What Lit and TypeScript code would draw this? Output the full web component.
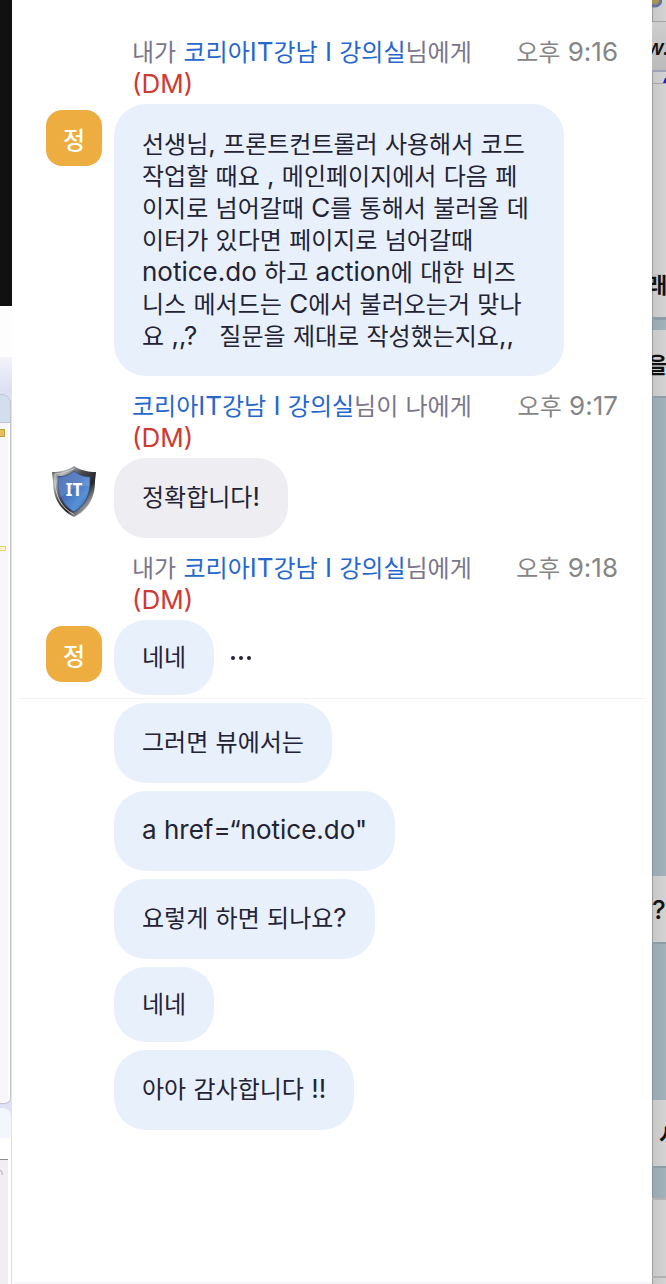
import { LitElement, html, css, svg } from "lit";
import { customElement, property } from "lit/decorators.js";
import { classMap } from "lit/directives/class-map.js";

interface Message {
  lines: string[];
  short?: boolean;
  wide?: boolean;
  actions?: boolean;
  ruled?: boolean;
}

interface Group {
  mine: boolean;
  time: string;
  messages: Message[];
}

const ROOM = "코리아IT강남 I 강의실";

const GROUPS: Group[] = [
  {
    mine: true,
    time: "오후 9:16",
    messages: [
      {
        wide: true,
        lines: [
          "선생님, 프론트컨트롤러 사용해서 코드",
          "작업할 때요 , 메인페이지에서 다음 페",
          "이지로 넘어갈때 C를 통해서 불러올 데",
          "이터가 있다면 페이지로 넘어갈때",
          "notice.do 하고 action에 대한 비즈",
          "니스 메서드는 C에서 불러오는거 맞나",
          "요 ,,?   질문을 제대로 작성했는지요,,",
        ],
      },
    ],
  },
  { mine: false, time: "오후 9:17", messages: [{ lines: ["정확합니다!"] }] },
  {
    mine: true,
    time: "오후 9:18",
    messages: [
      { lines: ["네네"], short: true, actions: true, ruled: true },
      { lines: ["그러면 뷰에서는"] },
      { lines: ["a href=“notice.do\""] },
      { lines: ["요렇게 하면 되나요?"] },
      { lines: ["네네"], short: true },
      { lines: ["아아 감사합니다 !!"] },
    ],
  },
];

// Latin letters, digits and spaces are set a step larger than Hangul.
const mixed = (text: string) =>
  text
    .split(/([^\uac00-\ud7a3]+)/)
    .filter((run) => run !== "")
    .map((run) => (/^[\uac00-\ud7a3]/.test(run) ? run : html`<span class="latin">${run}</span>`));

const shield = svg`
  <defs>
    <linearGradient id="rim" x1="0" y1="0" x2="1" y2="1">
      <stop offset="0" stop-color="#3c3d40"/><stop offset=".2" stop-color="#b9babd"/>
      <stop offset=".4" stop-color="#4a4b4e"/><stop offset=".62" stop-color="#252628"/>
      <stop offset=".8" stop-color="#a2a3a6"/><stop offset="1" stop-color="#2b2c2e"/>
    </linearGradient>
    <linearGradient id="face" x1="0" y1="0" x2="1" y2="1">
      <stop offset="0" stop-color="#3f62ad"/><stop offset=".45" stop-color="#4672be"/>
      <stop offset=".7" stop-color="#5792d8"/><stop offset="1" stop-color="#2c4f98"/>
    </linearGradient>
  </defs>
  <path fill="url(#rim)" d="M23 0C17 4 9 6 1 6C1 9 2 12 2 16C2 32 9 44 23 51C37 44 44 32 44 16C44 12 45 9 45 6C37 6 29 4 23 0Z"/>
  <path fill="none" stroke="#cdced0" stroke-width="1" d="M23 2.500C17 6 10 8 4 8C4 11 4 14 4 17C5 32 11 42 23 48.500"/>
  <path fill="url(#face)" stroke="#33456e" stroke-width=".8" d="M23 5C18 9 12 11 7 10.500C7 14 7 16 7 19C8 32 13 40 23 46C33 40 38 32 39 19C39 16 39 14 39 10.500C34 11 28 9 23 5Z"/>
  <path fill="#fff" opacity=".12" d="M7 12C13 11 18 9 23 5C28 9 33 11 39 12L38 20C27 19 16 25 9 32C7 25 7 18 7 12Z"/>`;

@customElement("chat-group")
class ChatGroup extends LitElement {
  @property({ attribute: false }) group!: Group;

  static styles = css`
    :host { display: block; }
    .latin { font-size: 26px; line-height: 1; }
    .head { display: flex; justify-content: space-between; align-items: flex-start; padding: 0 34px 3px 120px; line-height: 32px; }
    .who { color: #7b758a; white-space: nowrap; }
    .name { color: #2667cd; text-decoration: none; }
    .dm { display: block; color: #cf3a33; }
    .time { color: #858585; white-space: nowrap; }
    .body { display: grid; grid-template-columns: 56px minmax(0, 1fr); column-gap: 12px; padding: 0 34px; }
    .avatar { width: 56px; height: 56px; margin-top: 6px; border-radius: 16px; background: #edad41; color: #fff; display: flex; align-items: center; justify-content: center; font-weight: 500; }
    .avatar.crest { background: none; }
    .crest svg { width: 46px; height: 52px; display: block; }
    .crest text { font: bold 17px "Noto Sans", sans-serif; fill: #fff; }
    .list { display: flex; flex-direction: column; gap: 8px; }
    .row { display: flex; align-items: center; gap: 16px; }
    .bubble { box-sizing: border-box; padding: 24px 28px; border-radius: 32px; background: #e8f0fc; color: #232333; line-height: 32px; white-space: pre; }
    .bubble.wide { width: 100%; max-width: 450px; padding: 25px 28px 23px; }
    .bubble.short { line-height: 27px; }
    .bubble.theirs { background: #eeedf2; }
    .line { display: block; }
    .more { border: 0; padding: 0; background: none; width: 22px; height: 24px; }
    .more svg { display: block; }
    .rule { align-self: stretch; border: 0; height: 1px; margin: -5px -28px -4px -96px; background: #f2f2f5; }
  `;

  render() {
    const { mine, time, messages } = this.group;
    const name = html`<a class="name" href="#room">${mixed(ROOM)}</a>`;
    return html`
      <div class="head">
        <div class="who">${mine ? html`${mixed("내가 ")}${name}님에게` : html`${name}${mixed("님이 나에게")}`}<span class="dm">${mixed("(DM)")}</span></div>
        <time class="time">${mixed(time)}</time>
      </div>
      <div class="body">
        ${mine
          ? html`<div class="avatar">정</div>`
          : html`<div class="avatar crest"><svg viewBox="0 0 46 52">${shield}<text x="23" y="30" text-anchor="middle">IT</text></svg></div>`}
        <div class="list">
          ${messages.map(
            (m) => html`
              <div class="row">
                <div class=${classMap({ bubble: true, short: !!m.short, wide: !!m.wide, theirs: !mine })}>${m.lines.map((l) => html`<span class="line">${mixed(l)}</span>`)}</div>
                ${m.actions
                  ? html`<button class="more" aria-label="더 보기"><svg width="22" height="24" fill="#232333"><circle cx="3" cy="12" r="2"/><circle cx="11" cy="12" r="2"/><circle cx="19" cy="12" r="2"/></svg></button>`
                  : ""}
              </div>
              ${m.ruled ? html`<hr class="rule" />` : ""}
            `
          )}
        </div>
      </div>
    `;
  }
}

@customElement("app-root")
class AppRoot extends LitElement {
  static styles = css`
    :host {
      display: grid;
      grid-template-columns: 12px minmax(0, 1fr) 14px;
      min-height: 100vh;
      background: #fff;
      font: 24px "Inter", "Noto Sans CJK KR", sans-serif;
    }
    .chat { display: flex; flex-direction: column; gap: 15px; padding-top: 37px; background: #fff; }
    .foot { margin-top: auto; height: 2px; margin-left: 2px; background: #f6f6fa; }

    .left, .right { display: flex; flex-direction: column; overflow: hidden; }
    .left { background: #dfe2f4; height: 100vh; }
    .dark { height: 306px; background: #111; }
    .blank { height: 51px; background: #fdfdfd; }
    .bar { height: 37px; background: linear-gradient(#f3f3f8, #e9eaf9 40%, #dcdff0); }
    .tab { box-sizing: border-box; height: 29px; margin-right: 1px; border: solid #c3c5d5; border-width: 1px 1px 1px 0; border-top-right-radius: 9px; background: #d3deec; }
    .ruler { box-sizing: border-box; flex: 1; margin-right: 1px; border: solid #c3c5d5; border-width: 0 1px 1px 0; border-bottom-right-radius: 6px; background: linear-gradient(90deg, #f8f6f9 8px, #fff 8px); }
    .mark { box-sizing: border-box; width: 5px; height: 8px; margin-top: 6px; border: 1px solid #b0a73c; border-left: 0; background: #ebbd63; }
    .mark.pale { width: 6px; height: 5px; margin-top: 109px; border-color: #edd569; background: #fff3d0; }
    .tab2 { height: 30px; margin: 4px 1px 0 0; border-top-right-radius: 8px; background: #f4f6fd; }
    .gap { height: 21px; background: #fff; border-right: 1px solid #dcdced; }
    .pane { box-sizing: border-box; height: 125px; border-right: 1px solid #dcdced; background: linear-gradient(90deg, #f0eef1 8px, #fff 8px); }
    .edge { width: 8px; height: 1px; background: #8d8d8d; }
    .caret { display: block; margin-top: 10px; }

    .right { height: 100vh; background: #9cabb4; color: #111; font-size: 22px; font-weight: 700; }
    .cell { box-sizing: border-box; flex: none; overflow: hidden; white-space: nowrap; background: linear-gradient(90deg, #9c9c9c 1px, #c8c8c8 1px, #d3d3d3); display: flex; align-items: center; }
    .icon { height: 22px; border-bottom: 1px solid #a5a5a5; align-items: flex-start; }
    .address { height: 50px; border-bottom: 2px solid #9ea2b5; background: linear-gradient(#cecece, #bababa); font: italic 600 22px "Open Sans", sans-serif; }
    .links { height: 12px; border-bottom: 1px solid #a6a6a6; justify-content: flex-end; align-items: flex-end; }
    .tall { height: 190px; }
    .line1 { height: 44px; border-top: 1px solid #bdbdbd; align-items: flex-start; line-height: 20px; border-bottom: 1px solid #8e9ba3; }
    .note { height: 66px; }
    .note.ask { font-size: 26px; font-weight: 500; }
    .s12 { height: 12px; }
    .s480 { height: 480px; }
    .s158 { height: 158px; }
    .s32 { height: 32px; }
    .slate { flex: none; box-sizing: border-box; border-top: 2px solid #8e9ca5; background: linear-gradient(90deg, #839098 1px, #9aaab4 1px, #a2b1ba); }
    .end { height: 78px; border-top: 2px solid #b3b3b3; }
    .last { flex: 1; border-top: 2px solid #b3b3b3; }
    .far { margin-left: 7px; }
    .mid { margin-left: -5px; }
  `;

  render() {
    return html`
      <aside class="left">
        <div class="dark"></div>
        <div class="blank"></div>
        <div class="bar"></div>
        <div class="tab"></div>
        <div class="ruler"><div class="mark"></div><div class="mark pale"></div></div>
        <div class="tab2"></div>
        <div class="gap"></div>
        <div class="pane"><div class="edge"></div><svg class="caret" width="3" height="5"><path d="M0 0L2 2V5" stroke="#aaa" fill="none"/></svg></div>
      </aside>
      <main class="chat">
        ${GROUPS.map((g) => html`<chat-group .group=${g}></chat-group>`)}
        <div class="foot"></div>
      </main>
      <aside class="right">
        <div class="cell icon"><svg width="10" height="8"><circle cx="3" cy="0" r="6" fill="#a89552" stroke="#6474a0" stroke-width="3"/></svg></div>
        <div class="cell address"><span class="mid">w.</span></div>
        <div class="cell links"><svg width="3" height="5"><path d="M0 5L2 0H3V5Z" fill="#2020cc"/></svg></div>
        <div class="cell tall"></div>
        <div class="cell line1"><span class="mid">래</span></div>
        <div class="slate s12"></div>
        <div class="cell note"><span class="mid">을</span></div>
        <div class="slate s480"></div>
        <div class="cell note ask"><span>?</span></div>
        <div class="slate s158"></div>
        <div class="cell note"><span class="far">시</span></div>
        <div class="slate s32"></div>
        <div class="cell end"></div>
        <div class="cell last"></div>
      </aside>
    `;
  }
}
